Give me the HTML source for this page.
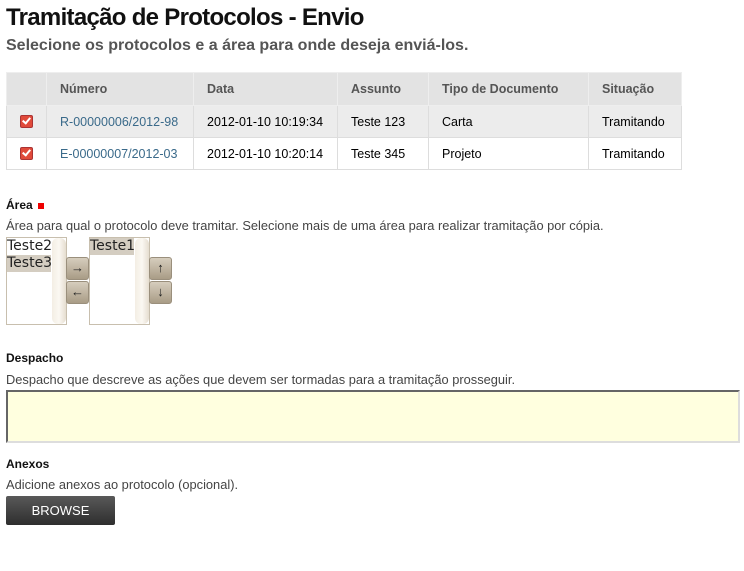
<!DOCTYPE html>
<html><head><meta charset="utf-8"><style>
body{margin:0;width:744px;height:571px;background:#fff;font-family:"Liberation Sans",sans-serif;position:relative;overflow:hidden}
.a{position:absolute;white-space:nowrap}
h1{position:absolute;left:6px;top:4px;margin:0;font-size:24px;font-weight:bold;color:#111;letter-spacing:-0.7px;white-space:nowrap}
.sub{left:6px;top:37px;font-size:16px;font-weight:bold;color:#555}
table{position:absolute;left:6px;top:72px;border-collapse:collapse;width:675px;font-size:12.5px;table-layout:fixed}
td,th{border:1px solid #ddd;padding:0 0 0 13px;text-align:left;height:31px;white-space:nowrap;overflow:hidden}
th{background:#e3e3e3;color:#555;height:32px;border-color:#eee}
tr.r1 td{background:#ececec}
a{color:#3a6a8a;text-decoration:none}
.cb{display:inline-block;width:11px;height:11px;background:#e04a3a;border-radius:2px;border:1px solid #a33;position:relative;top:1px}
.cb:after{content:"";position:absolute;left:3px;top:0px;width:3px;height:6px;border:solid #fff;border-width:0 2px 2px 0;transform:rotate(40deg)}
.lbl{font-size:12px;font-weight:bold;color:#111}
.desc{font-size:12.85px;color:#444}
.lb{position:absolute;top:237px;width:59px;height:86px;border:1px solid #c8bfae;background:#fff;font-family:"DejaVu Sans",sans-serif;font-size:14px;color:#222}
.lb .sb{position:absolute;right:0;top:0;width:14px;height:86px;background:linear-gradient(90deg,#f3eee4,#fbf8f2,#e5ddd0);border-radius:6px}
.lb div.o{height:17px;line-height:17px;width:44px;padding-left:0}
.sel{background:#d4cdc1}
.bt{position:absolute;width:21px;height:21px;background:linear-gradient(#d6cdbd,#a99c86);border:1px solid #9a8f7c;border-radius:3px;font-size:13px;text-align:center;line-height:20px;color:#222}
.ta{position:absolute;left:6px;top:390px;width:730px;height:49px;background:#ffffdf;border:2px solid #666;border-right-color:#ddd;border-bottom-color:#ddd}
.br{position:absolute;left:6px;top:496px;width:109px;height:29px;background:linear-gradient(#595959,#2e2e2e);color:#fff;font-size:13px;text-align:center;line-height:29px;border-radius:2px}
</style></head><body>
<h1>Tramitação de Protocolos - Envio</h1>
<div class="a sub">Selecione os protocolos e a área para onde deseja enviá-los.</div>
<table>
<colgroup><col style="width:40px"><col style="width:147px"><col style="width:144px"><col style="width:91px"><col style="width:160px"><col style="width:93px"></colgroup>
<tr><th></th><th>Número</th><th>Data</th><th>Assunto</th><th>Tipo de Documento</th><th>Situação</th></tr>
<tr class="r1"><td><span class="cb"></span></td><td><a>R-00000006/2012-98</a></td><td>2012-01-10 10:19:34</td><td>Teste 123</td><td>Carta</td><td>Tramitando</td></tr>
<tr><td><span class="cb"></span></td><td><a>E-00000007/2012-03</a></td><td>2012-01-10 10:20:14</td><td>Teste 345</td><td>Projeto</td><td>Tramitando</td></tr>
</table>
<div class="a lbl" style="left:6px;top:198px">Área <span style="display:inline-block;width:6px;height:6px;background:#e00;margin-left:2px"></span></div>
<div class="a desc" style="left:6px;top:218px">Área para qual o protocolo deve tramitar. Selecione mais de uma área para realizar tramitação por cópia.</div>
<div class="lb" style="left:6px"><div class="o">Teste2</div><div class="o sel">Teste3</div><div class="sb"></div></div>
<div class="bt" style="left:66px;top:257px">→</div>
<div class="bt" style="left:66px;top:281px">←</div>
<div class="lb" style="left:89px"><div class="o sel">Teste1</div><div class="sb"></div></div>
<div class="bt" style="left:149px;top:257px">↑</div>
<div class="bt" style="left:149px;top:281px">↓</div>
<div class="a lbl" style="left:6px;top:351px">Despacho</div>
<div class="a desc" style="left:6px;top:372px">Despacho que descreve as ações que devem ser tormadas para a tramitação prosseguir.</div>
<div class="ta"></div>
<div class="a lbl" style="left:6px;top:457px">Anexos</div>
<div class="a desc" style="left:6px;top:477px">Adicione anexos ao protocolo (opcional).</div>
<div class="br">BROWSE</div>
</body></html>
